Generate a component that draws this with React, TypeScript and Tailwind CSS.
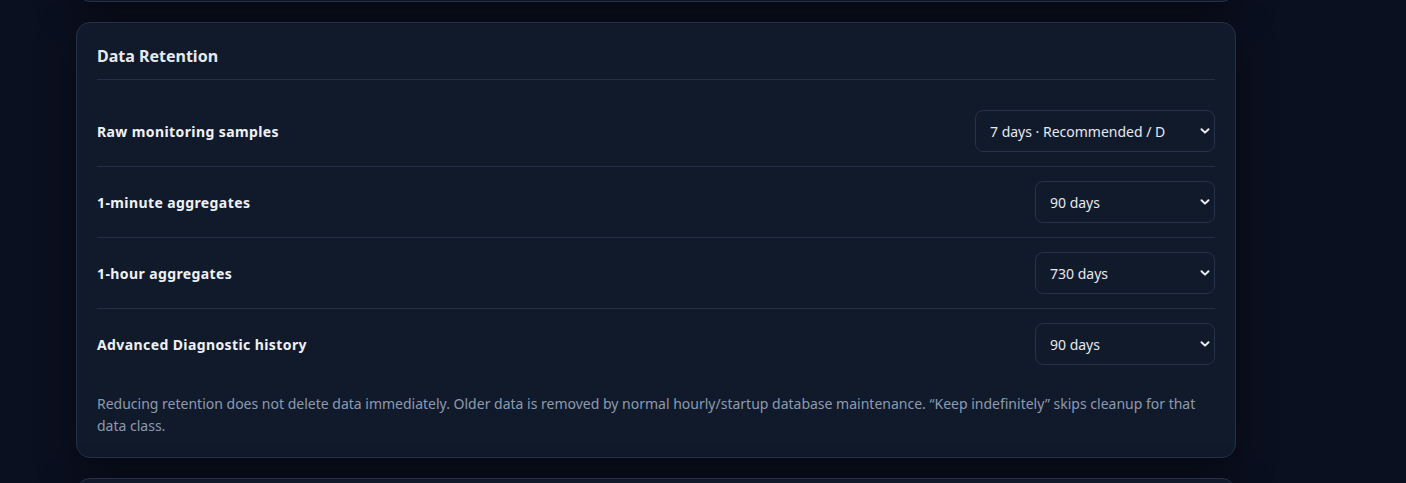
import React from "react";

const rows = [
  { label: "Raw monitoring samples", value: "7 days · Recommended / Default", wide: true },
  { label: "1-minute aggregates", value: "90 days", wide: false },
  { label: "1-hour aggregates", value: "730 days", wide: false },
  { label: "Advanced Diagnostic history", value: "90 days", wide: false },
];

function Chevron() {
  return (
    <svg width="10" height="10" viewBox="0 0 10 10" className="shrink-0">
      <path d="M1.5 3.2 L5 6.6 L8.5 3.2" fill="none" stroke="#e8ecf2" strokeWidth="2" strokeLinecap="round" strokeLinejoin="round" />
    </svg>
  );
}

export default function App() {
  return (
    <div
      className="min-h-[483px] w-full bg-[#0b1020] overflow-hidden"
      style={{ fontFamily: '"Noto Sans", "Open Sans", Arial, sans-serif' }}
    >
      <div className="flex flex-col gap-5 pl-[76px] w-[1236px]">
        <div className="-mt-[98px] h-[100px] w-[1160px] rounded-[14px] border border-[#243047] bg-[#111a2b] shadow-[0_10px_40px_rgba(0,0,0,0.45)]" />
        <div className="w-[1160px] rounded-[14px] border border-[#243047] bg-[#111a2b] px-[20px] pt-[21px] pb-[20px] shadow-[0_10px_40px_rgba(0,0,0,0.45)]">
          <div className="border-b border-[#243047] pb-[11px]">
            <h2 className="text-[16px] leading-6 font-bold text-[#e6eaf0]">Data Retention</h2>
          </div>
          <div className="mt-4 flex flex-col">
            {rows.map((r, i) => (
              <div
                key={r.label}
                className={`flex items-center justify-between py-[14px] ${i < rows.length - 1 ? "border-b border-[#243047]" : ""}`}
              >
                <span className="text-[14px] font-bold tracking-[0.4px] text-[#eef2f7]">{r.label}</span>
                <div
                  className={`flex h-[42px] items-center justify-between rounded-[8px] border border-[#263248] bg-[#111a2b] pl-[14px] pr-[4px] ${r.wide ? "w-[240px]" : "w-[180px]"}`}
                >
                  <span className={`overflow-hidden whitespace-nowrap text-[14px] text-[#e5e9f0] ${r.wide ? "w-[175px]" : "w-[140px]"}`}>
                    {r.value}
                  </span>
                  <Chevron />
                </div>
              </div>
            ))}
          </div>
          <p className="mt-[14px] text-[14px] leading-[22px] text-[#8c9ab0]">
            Reducing retention does not delete data immediately. Older data is removed by normal hourly/startup database maintenance. “Keep indefinitely” skips cleanup for that data class.
          </p>
        </div>
        <div className="h-[100px] w-[1160px] rounded-[14px] border border-[#243047] bg-[#111a2b] shadow-[0_10px_40px_rgba(0,0,0,0.45)]" />
      </div>
    </div>
  );
}
